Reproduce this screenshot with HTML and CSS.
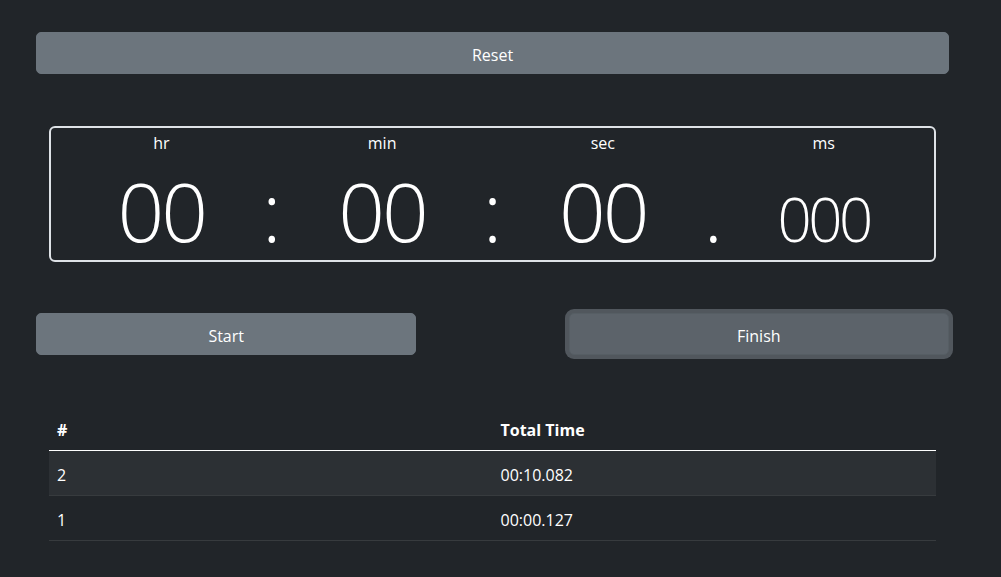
FILE: index.html
```html
<!DOCTYPE html>
<html lang="en">
<head>
<meta charset="utf-8">
<title>Stopwatch</title>
<link rel="stylesheet" href="styles.css">
</head>
<body>
<div class="page">
  <button class="btn btn-reset">Reset</button>

  <div class="timer">
    <div class="label l-hr">hr</div>
    <div class="label l-min">min</div>
    <div class="label l-sec">sec</div>
    <div class="label l-ms">ms</div>

    <div class="value v-hr">00</div>
    <div class="sep s-1">:</div>
    <div class="value v-min">00</div>
    <div class="sep s-2">:</div>
    <div class="value v-sec">00</div>
    <div class="sep s-3">.</div>
    <div class="value v-ms">000</div>
  </div>

  <div class="controls">
    <button class="btn btn-start">Start</button>
    <button class="btn btn-finish">Finish</button>
  </div>

  <table class="laps">
    <thead>
      <tr><th>#</th><th>Total Time</th></tr>
    </thead>
    <tbody>
      <tr class="striped"><td>2</td><td>00:10.082</td></tr>
      <tr><td>1</td><td>00:00.127</td></tr>
    </tbody>
  </table>
</div>
</body>
</html>
```

FILE: styles.css
```css
* { box-sizing: border-box; }

html, body {
  margin: 0;
  background: #212529;
  color: #fff;
  font-family: "Open Sans", "Noto Sans", sans-serif;
  font-size: 16px;
  line-height: 24px;
}

.page {
  padding: 32px 52px 0 36px;
}

.btn {
  display: block;
  height: 42px;
  border: 1px solid #6c757d;
  border-radius: 5px;
  background: #6c757d;
  color: #fff;
  font-family: inherit;
  font-size: 16px;
  line-height: 24px;
  padding: 3px 12px 0;
  cursor: pointer;
}

.btn-reset {
  width: 100%;
}

.timer {
  margin: 52px 13px 0 13px;
  height: 136px;
  border: 2px solid #dee2e6;
  border-radius: 6px;
  display: grid;
  grid-template-columns: 1fr 0px 1fr 0px 1fr 0px 1fr;
  grid-template-rows: 46px 66px;
  align-items: baseline;
  padding-top: 3px;
}

.label {
  grid-row: 1;
  align-self: start;
  justify-self: center;
  font-size: 16px;
  line-height: 24px;
}
.l-hr { grid-column: 1; }
.l-min { grid-column: 3; }
.l-sec { grid-column: 5; }
.l-ms { grid-column: 7; }

.value, .sep {
  grid-row: 2;
  justify-self: center;
  font-weight: 300;
  font-size: 82px;
  line-height: 66px;
}
.value {
  letter-spacing: -3px;
}
.v-hr { grid-column: 1; }
.v-min { grid-column: 3; }
.v-sec { grid-column: 5; }
.v-ms {
  grid-column: 7;
  font-size: 60px;
  letter-spacing: -3.5px;
}
.s-1 { grid-column: 2; }
.s-2 { grid-column: 4; }
.s-3 { grid-column: 6; }

.controls {
  margin-top: 51px;
  display: grid;
  grid-template-columns: 5fr 2fr 5fr;
}
.btn-start {
  grid-column: 1;
  width: 100%;
}
.btn-finish {
  grid-column: 3;
  width: 100%;
  background: #5c636a;
  border-color: #565e64;
  box-shadow: 0 0 0 4px rgba(130, 138, 145, 0.5);
}

.laps {
  margin: 54px 13px 0 13px;
  width: calc(100% - 26px);
  border-collapse: collapse;
  table-layout: fixed;
}
.laps th, .laps td {
  text-align: left;
  font-size: 16px;
}
.laps th {
  padding: 10px 8px 8px;
  font-weight: 700;
  line-height: 23px;
  border-bottom: 1px solid #fff;
}
.laps td {
  padding: 12px 8px 7px;
  line-height: 25px;
  border-bottom: 1px solid #373b3e;
}
.laps tr.striped td {
  background: #2c3034;
}
```
